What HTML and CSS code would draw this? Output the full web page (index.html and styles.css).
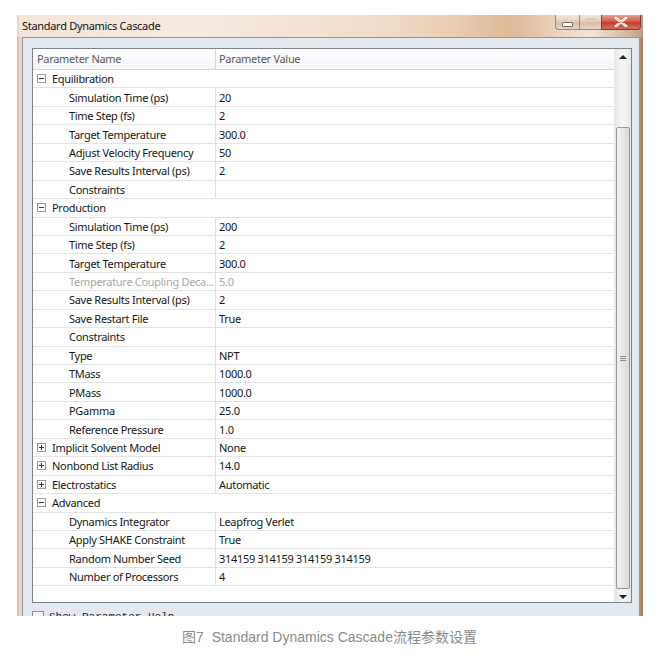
FILE: index.html
```html
<!DOCTYPE html>
<html>
<head>
<meta charset="utf-8">
<link rel="stylesheet" href="styles.css">
</head>
<body>
<div class="window">
  <div class="titlebar">
    <span class="title">Standard Dynamics Cascade</span>
    <div class="wbtns">
      <div class="wbtn min"><span class="min-glyph"></span></div>
      <div class="wbtn max"><span class="max-glyph"></span></div>
      <div class="wbtn close">
        <svg width="14" height="10" viewBox="0 0 14 10"><path d="M2 1 L12 9 M12 1 L2 9" stroke="#fff" stroke-width="2.6" stroke-linecap="round"/><path d="M2 1 L12 9 M12 1 L2 9" stroke="#7a2a20" stroke-width="0.6" fill="none" opacity="0.5"/></svg>
      </div>
    </div>
  </div>
  <div class="client">
    <div class="grid">
      <div class="table">
        <div class="header">
          <div class="hname">Parameter Name</div>
          <div class="hval">Parameter Value</div>
        </div>
        <div class="row group"><span class="exp minus"></span><span class="gname">Equilibration</span></div>
        <div class="row"><div class="name">Simulation Time (ps)</div><div class="val">20</div></div>
        <div class="row"><div class="name">Time Step (fs)</div><div class="val">2</div></div>
        <div class="row"><div class="name">Target Temperature</div><div class="val">300.0</div></div>
        <div class="row"><div class="name">Adjust Velocity Frequency</div><div class="val">50</div></div>
        <div class="row"><div class="name">Save Results Interval (ps)</div><div class="val">2</div></div>
        <div class="row"><div class="name">Constraints</div><div class="val"></div></div>
        <div class="row group"><span class="exp minus"></span><span class="gname">Production</span></div>
        <div class="row"><div class="name">Simulation Time (ps)</div><div class="val">200</div></div>
        <div class="row"><div class="name">Time Step (fs)</div><div class="val">2</div></div>
        <div class="row"><div class="name">Target Temperature</div><div class="val">300.0</div></div>
        <div class="row disabled"><div class="name">Temperature Coupling Deca...</div><div class="val">5.0</div></div>
        <div class="row"><div class="name">Save Results Interval (ps)</div><div class="val">2</div></div>
        <div class="row"><div class="name">Save Restart File</div><div class="val">True</div></div>
        <div class="row"><div class="name">Constraints</div><div class="val"></div></div>
        <div class="row"><div class="name">Type</div><div class="val">NPT</div></div>
        <div class="row"><div class="name">TMass</div><div class="val">1000.0</div></div>
        <div class="row"><div class="name">PMass</div><div class="val">1000.0</div></div>
        <div class="row"><div class="name">PGamma</div><div class="val">25.0</div></div>
        <div class="row"><div class="name">Reference Pressure</div><div class="val">1.0</div></div>
        <div class="row"><div class="name gname2"><span class="exp plus"></span>Implicit Solvent Model</div><div class="val">None</div></div>
        <div class="row"><div class="name gname2"><span class="exp plus"></span>Nonbond List Radius</div><div class="val">14.0</div></div>
        <div class="row"><div class="name gname2"><span class="exp plus"></span>Electrostatics</div><div class="val">Automatic</div></div>
        <div class="row group"><span class="exp minus"></span><span class="gname">Advanced</span></div>
        <div class="row"><div class="name">Dynamics Integrator</div><div class="val">Leapfrog Verlet</div></div>
        <div class="row"><div class="name">Apply SHAKE Constraint</div><div class="val">True</div></div>
        <div class="row"><div class="name">Random Number Seed</div><div class="val">314159 314159 314159 314159</div></div>
        <div class="row"><div class="name">Number of Processors</div><div class="val">4</div></div>
      </div>
      <div class="scrollbar">
        <div class="arrow up"></div>
        <div class="track">
          <div class="thumb"><span class="grip"></span></div>
        </div>
        <div class="arrow down"></div>
      </div>
    </div>
    <div class="help"><span class="chk"></span><span class="helptxt">Show Parameter Help</span></div>
  </div>
</div>
<div class="caption">图7&nbsp;&nbsp;Standard Dynamics Cascade流程参数设置</div>
</body>
</html>
```
FILE: styles.css
```css
html, body {
  margin: 0;
  padding: 0;
  background: #ffffff;
}
body {
  font-family: "Noto Sans", "Noto Sans CJK SC", sans-serif;
  font-size: 11px;
  letter-spacing: -0.3px;
  color: #161616;
}
.window {
  margin: 15px 0 0 17px;
  width: 626px;
  height: 601px;
  display: flex;
  flex-direction: column;
  overflow: hidden;
  background: linear-gradient(to right, #d9b596 0px, #efd9c6 3px, #f3e4d7 30%, #efd8c4 60%, #e6c4a4 78%, #f1dccb 92%, #b89070 99.5%, #9c7a60 100%);
}
.titlebar {
  height: 22px;
  flex: none;
  display: flex;
  align-items: flex-start;
  background: linear-gradient(to right, rgba(255,255,255,0.35), rgba(255,255,255,0.1) 50%, rgba(255,255,255,0) 70%, rgba(200,150,110,0.25) 80%, rgba(255,255,255,0.2) 90%);
}
.title {
  margin: 3px 0 0 5px;
  font-size: 11px;
  line-height: 15px;
  color: #111;
}
.wbtns {
  margin-left: auto;
  margin-right: 2px;
  display: flex;
  height: 15px;
}
.wbtn {
  height: 15px;
  box-sizing: border-box;
  border: 1px solid #9c8876;
  border-top: none;
  display: flex;
  align-items: center;
  justify-content: center;
  background: linear-gradient(#f4e8de, #e3cbb8 50%, #d8bca6 51%, #e8d2c0);
}
.wbtn.min {
  width: 24px;
  border-radius: 0 0 0 4px;
  border-right: none;
}
.wbtn.max {
  width: 22px;
  border-right: none;
}
.wbtn.close {
  width: 40px;
  border-radius: 0 0 4px 0;
  border-color: #8a3a2c;
  background: linear-gradient(#e8a090, #d0604c 45%, #c0402c 55%, #d8705a);
}
.min-glyph {
  width: 9px;
  height: 3px;
  margin-top: 4px;
  background: #fff;
  border: 1px solid #7b6d64;
  border-radius: 1px;
}
.max-glyph {
  width: 7px;
  height: 5px;
  border: 1px solid #d9c7b8;
  border-top-width: 2px;
}
.client {
  flex: 1;
  margin: 0 3px 0 5px;
  border: 1px solid #8d96a2;
  border-bottom: none;
  background: #e4e9ef;
  padding: 10px 7px 0 9px;
}
.grid {
  height: 555px;
  box-sizing: border-box;
  border: 1px solid #7d838c;
  background: #fff;
  display: flex;
}
.table {
  flex: 1;
  display: flex;
  flex-direction: column;
}
.header {
  height: 21px;
  flex: none;
  box-sizing: border-box;
  border-bottom: 1px solid #d5d5d5;
  background: linear-gradient(#ffffff, #f4f5f7);
  display: flex;
  color: #5a5a5a;
}
.hname {
  width: 183px;
  box-sizing: border-box;
  padding-left: 4px;
  border-right: 1px solid #d5d5d5;
  line-height: 20px;
}
.hval {
  padding-left: 3px;
  line-height: 20px;
}
.row {
  height: 18.44px;
  flex: none;
  box-sizing: border-box;
  border-bottom: 1px solid #e3e3e3;
  display: flex;
  align-items: center;
}
.row .name {
  width: 183px;
  height: 100%;
  box-sizing: border-box;
  padding-left: 36px;
  border-right: 1px solid #e0e0e0;
  display: flex;
  align-items: center;
  white-space: nowrap;
  overflow: hidden;
}
.row .name.gname2 {
  padding-left: 4px;
}
.row .val {
  padding-left: 3px;
  white-space: nowrap;
}
.row.disabled {
  color: #a8a8a8;
}
.row.group {
  padding-left: 4px;
}
.exp {
  width: 9px;
  height: 9px;
  box-sizing: border-box;
  border: 1px solid #9a9a9a;
  position: relative;
  margin-right: 6px;
  flex: none;
  background: #fff;
}
.exp::before {
  content: "";
  position: absolute;
  left: 1px;
  top: 3px;
  width: 5px;
  height: 1px;
  background: #333;
}
.exp.plus::after {
  content: "";
  position: absolute;
  left: 3px;
  top: 1px;
  width: 1px;
  height: 5px;
  background: #333;
}
.scrollbar {
  width: 16px;
  flex: none;
  display: flex;
  flex-direction: column;
  background: linear-gradient(to right, #e8e8e8, #f4f4f4 40%, #f4f4f4 60%, #e8e8e8);
  border-left: 1px solid #eaeaea;
}
.arrow {
  height: 17px;
  flex: none;
  position: relative;
}
.arrow.up::after {
  content: "";
  position: absolute;
  left: 4px;
  top: 6px;
  border-left: 4px solid transparent;
  border-right: 4px solid transparent;
  border-bottom: 4px solid #222;
}
.arrow.down::after {
  content: "";
  position: absolute;
  left: 4px;
  top: 6px;
  border-left: 4px solid transparent;
  border-right: 4px solid transparent;
  border-top: 4px solid #222;
}
.track {
  flex: 1;
  padding-top: 61px;
  display: flex;
  flex-direction: column;
}
.thumb {
  height: 462px;
  box-sizing: border-box;
  margin: 0 1px;
  border: 1px solid #979797;
  border-radius: 2px;
  background: linear-gradient(to right, #f2f2f2, #e6e6e6 50%, #d9d9d9);
  display: flex;
  align-items: center;
  justify-content: center;
}
.grip {
  width: 6px;
  height: 5px;
  background: repeating-linear-gradient(#8a8a8a 0px, #8a8a8a 1px, #e8e8e8 1px, #e8e8e8 2px);
}
.help {
  margin-top: 8px;
  display: flex;
  align-items: flex-start;
  gap: 5px;
}
.chk {
  width: 10px;
  height: 10px;
  border: 1px solid #8e8f8f;
  background: #f4f4f4;
}
.helptxt {
  font-family: "Liberation Mono", monospace;
  font-size: 11px;
  letter-spacing: 0;
  line-height: 13px;
  color: #222;
}
.caption {
  margin-top: 13px;
  text-align: center;
  font-family: "Liberation Sans", "Noto Sans CJK SC", sans-serif;
  font-size: 14px;
  line-height: 16px;
  color: #8a8a8a;
  letter-spacing: 0;
}
```
